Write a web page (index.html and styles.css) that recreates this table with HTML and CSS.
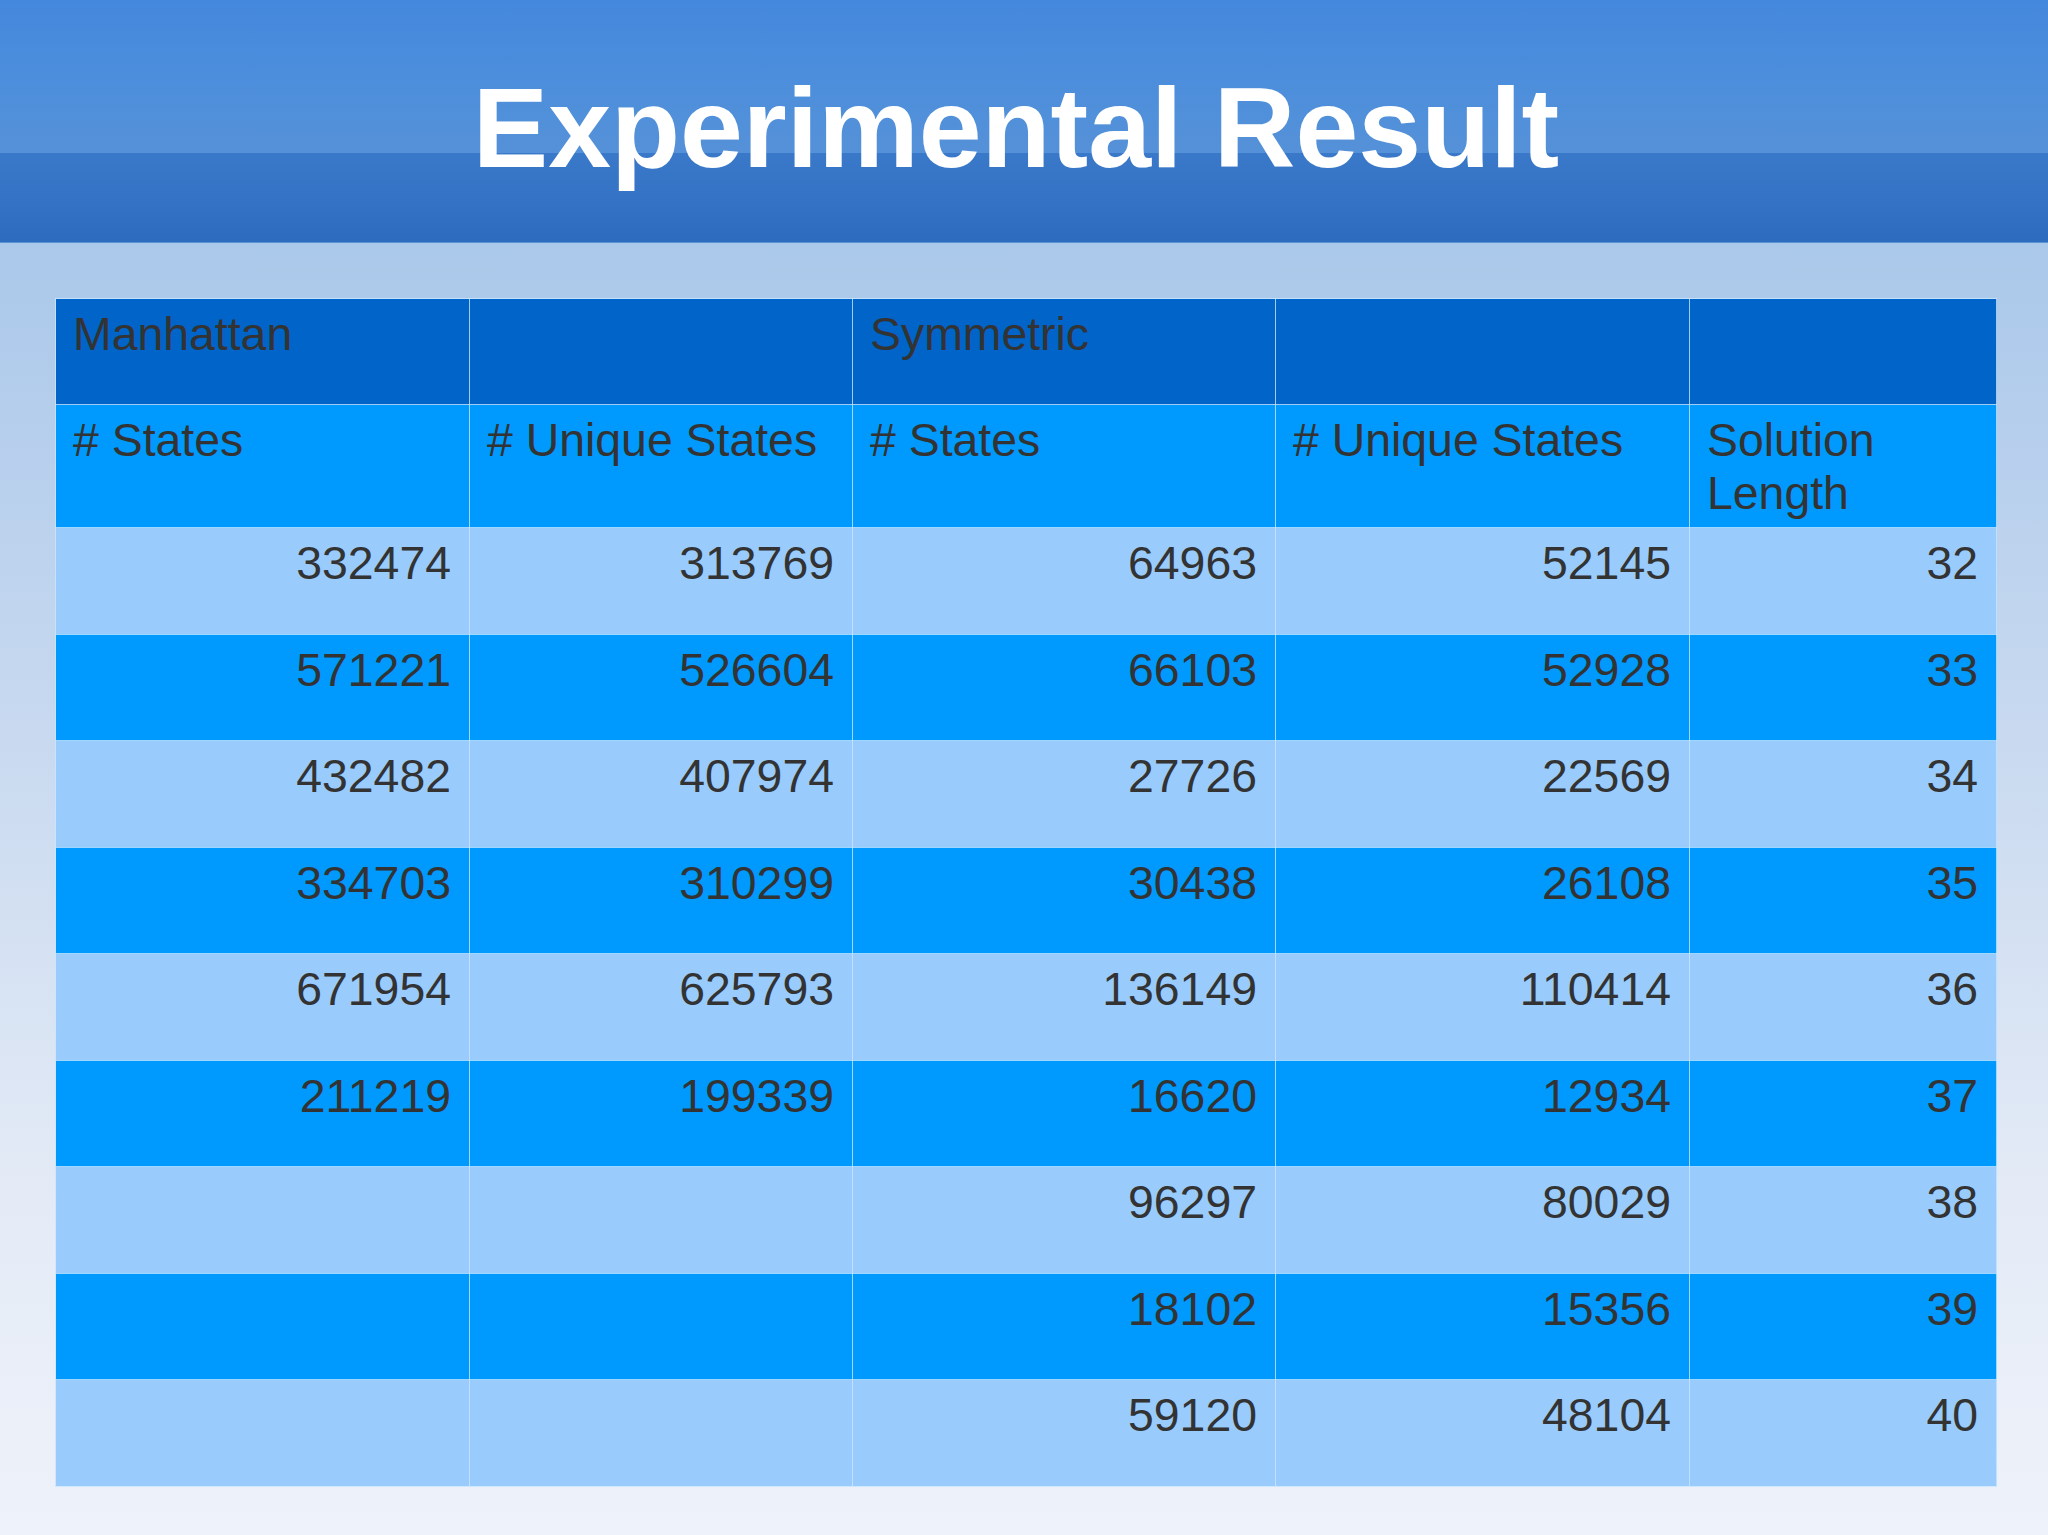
FILE: index.html
```html
<!DOCTYPE html>
<html lang="en">
<head>
<meta charset="utf-8">
<title>Experimental Result</title>
<link rel="stylesheet" href="styles.css">
</head>
<body>
<div class="slide">
  <header class="title-band">
    <div class="band-top"></div>
    <div class="band-bottom"></div>
    <h1 class="title">Experimental Result</h1>
  </header>
  <main class="content">
    <table class="results">
      <colgroup>
        <col class="c1"><col class="c2"><col class="c3"><col class="c4"><col class="c5">
      </colgroup>
      <thead>
        <tr class="group-row">
          <th>Manhattan</th><th></th><th>Symmetric</th><th></th><th></th>
        </tr>
        <tr class="label-row">
          <th># States</th><th># Unique States</th><th># States</th><th># Unique States</th><th>Solution<br>Length</th>
        </tr>
      </thead>
      <tbody>
        <tr class="light"><td>332474</td><td>313769</td><td>64963</td><td>52145</td><td>32</td></tr>
        <tr class="dark"><td>571221</td><td>526604</td><td>66103</td><td>52928</td><td>33</td></tr>
        <tr class="light"><td>432482</td><td>407974</td><td>27726</td><td>22569</td><td>34</td></tr>
        <tr class="dark"><td>334703</td><td>310299</td><td>30438</td><td>26108</td><td>35</td></tr>
        <tr class="light"><td>671954</td><td>625793</td><td>136149</td><td>110414</td><td>36</td></tr>
        <tr class="dark"><td>211219</td><td>199339</td><td>16620</td><td>12934</td><td>37</td></tr>
        <tr class="light"><td></td><td></td><td>96297</td><td>80029</td><td>38</td></tr>
        <tr class="dark"><td></td><td></td><td>18102</td><td>15356</td><td>39</td></tr>
        <tr class="light"><td></td><td></td><td>59120</td><td>48104</td><td>40</td></tr>
      </tbody>
    </table>
  </main>
</div>
</body>
</html>
```

FILE: styles.css
```css
html, body {
  margin: 0;
  padding: 0;
}
body {
  width: 2048px;
  height: 1535px;
  overflow: hidden;
  font-family: "Liberation Sans", Arial, sans-serif;
}
.slide {
  width: 2048px;
  height: 1535px;
  background: linear-gradient(180deg, #aac8ea 243px, #c6d8ef 700px, #e4ebf6 1200px, #eef2fa 1535px);
  display: flex;
  flex-direction: column;
}
.title-band {
  position: relative;
  height: 243px;
  flex: none;
  border-bottom: 1px solid #5b93d6;
  box-sizing: border-box;
}
.band-top {
  height: 153px;
  background: linear-gradient(180deg, #4488dd 0%, #4c8edc 50%, #5591d8 100%);
}
.band-bottom {
  height: 89px;
  background: linear-gradient(180deg, #3a79c9 0%, #3473c5 50%, #2d6bbf 100%);
}
.title {
  position: absolute;
  left: 0;
  right: 16px;
  top: 72px;
  margin: 0;
  text-align: center;
  color: #ffffff;
  font-family: "Liberation Sans", Arial, sans-serif;
  font-weight: bold;
  font-size: 113px;
  line-height: 1;
}
.content {
  padding: 55px 0 0 55px;
}
.results {
  border-collapse: collapse;
  table-layout: fixed;
  width: 1941px;
  color: #333333;
  font-size: 46.4px;
  line-height: 53px;
}
.c1 { width: 414px; }
.c2 { width: 383px; }
.c3 { width: 423px; }
.c4 { width: 414px; }
.c5 { width: 307px; }
.results th,
.results td {
  border: 1px solid rgba(200, 230, 255, 0.8);
  vertical-align: top;
  padding: 9px 18px 7px 17px;
  font-weight: normal;
}
.results th {
  text-align: left;
}
.results td {
  text-align: right;
}
.group-row {
  height: 106px;
  background: #0064c9;
}
.label-row {
  height: 123px;
  background: #0099fd;
}
.results tbody tr {
  height: 106.5px;
}
.results tr.light {
  background: #99ccfd;
}
.results tr.dark {
  background: #0099fd;
}
```
